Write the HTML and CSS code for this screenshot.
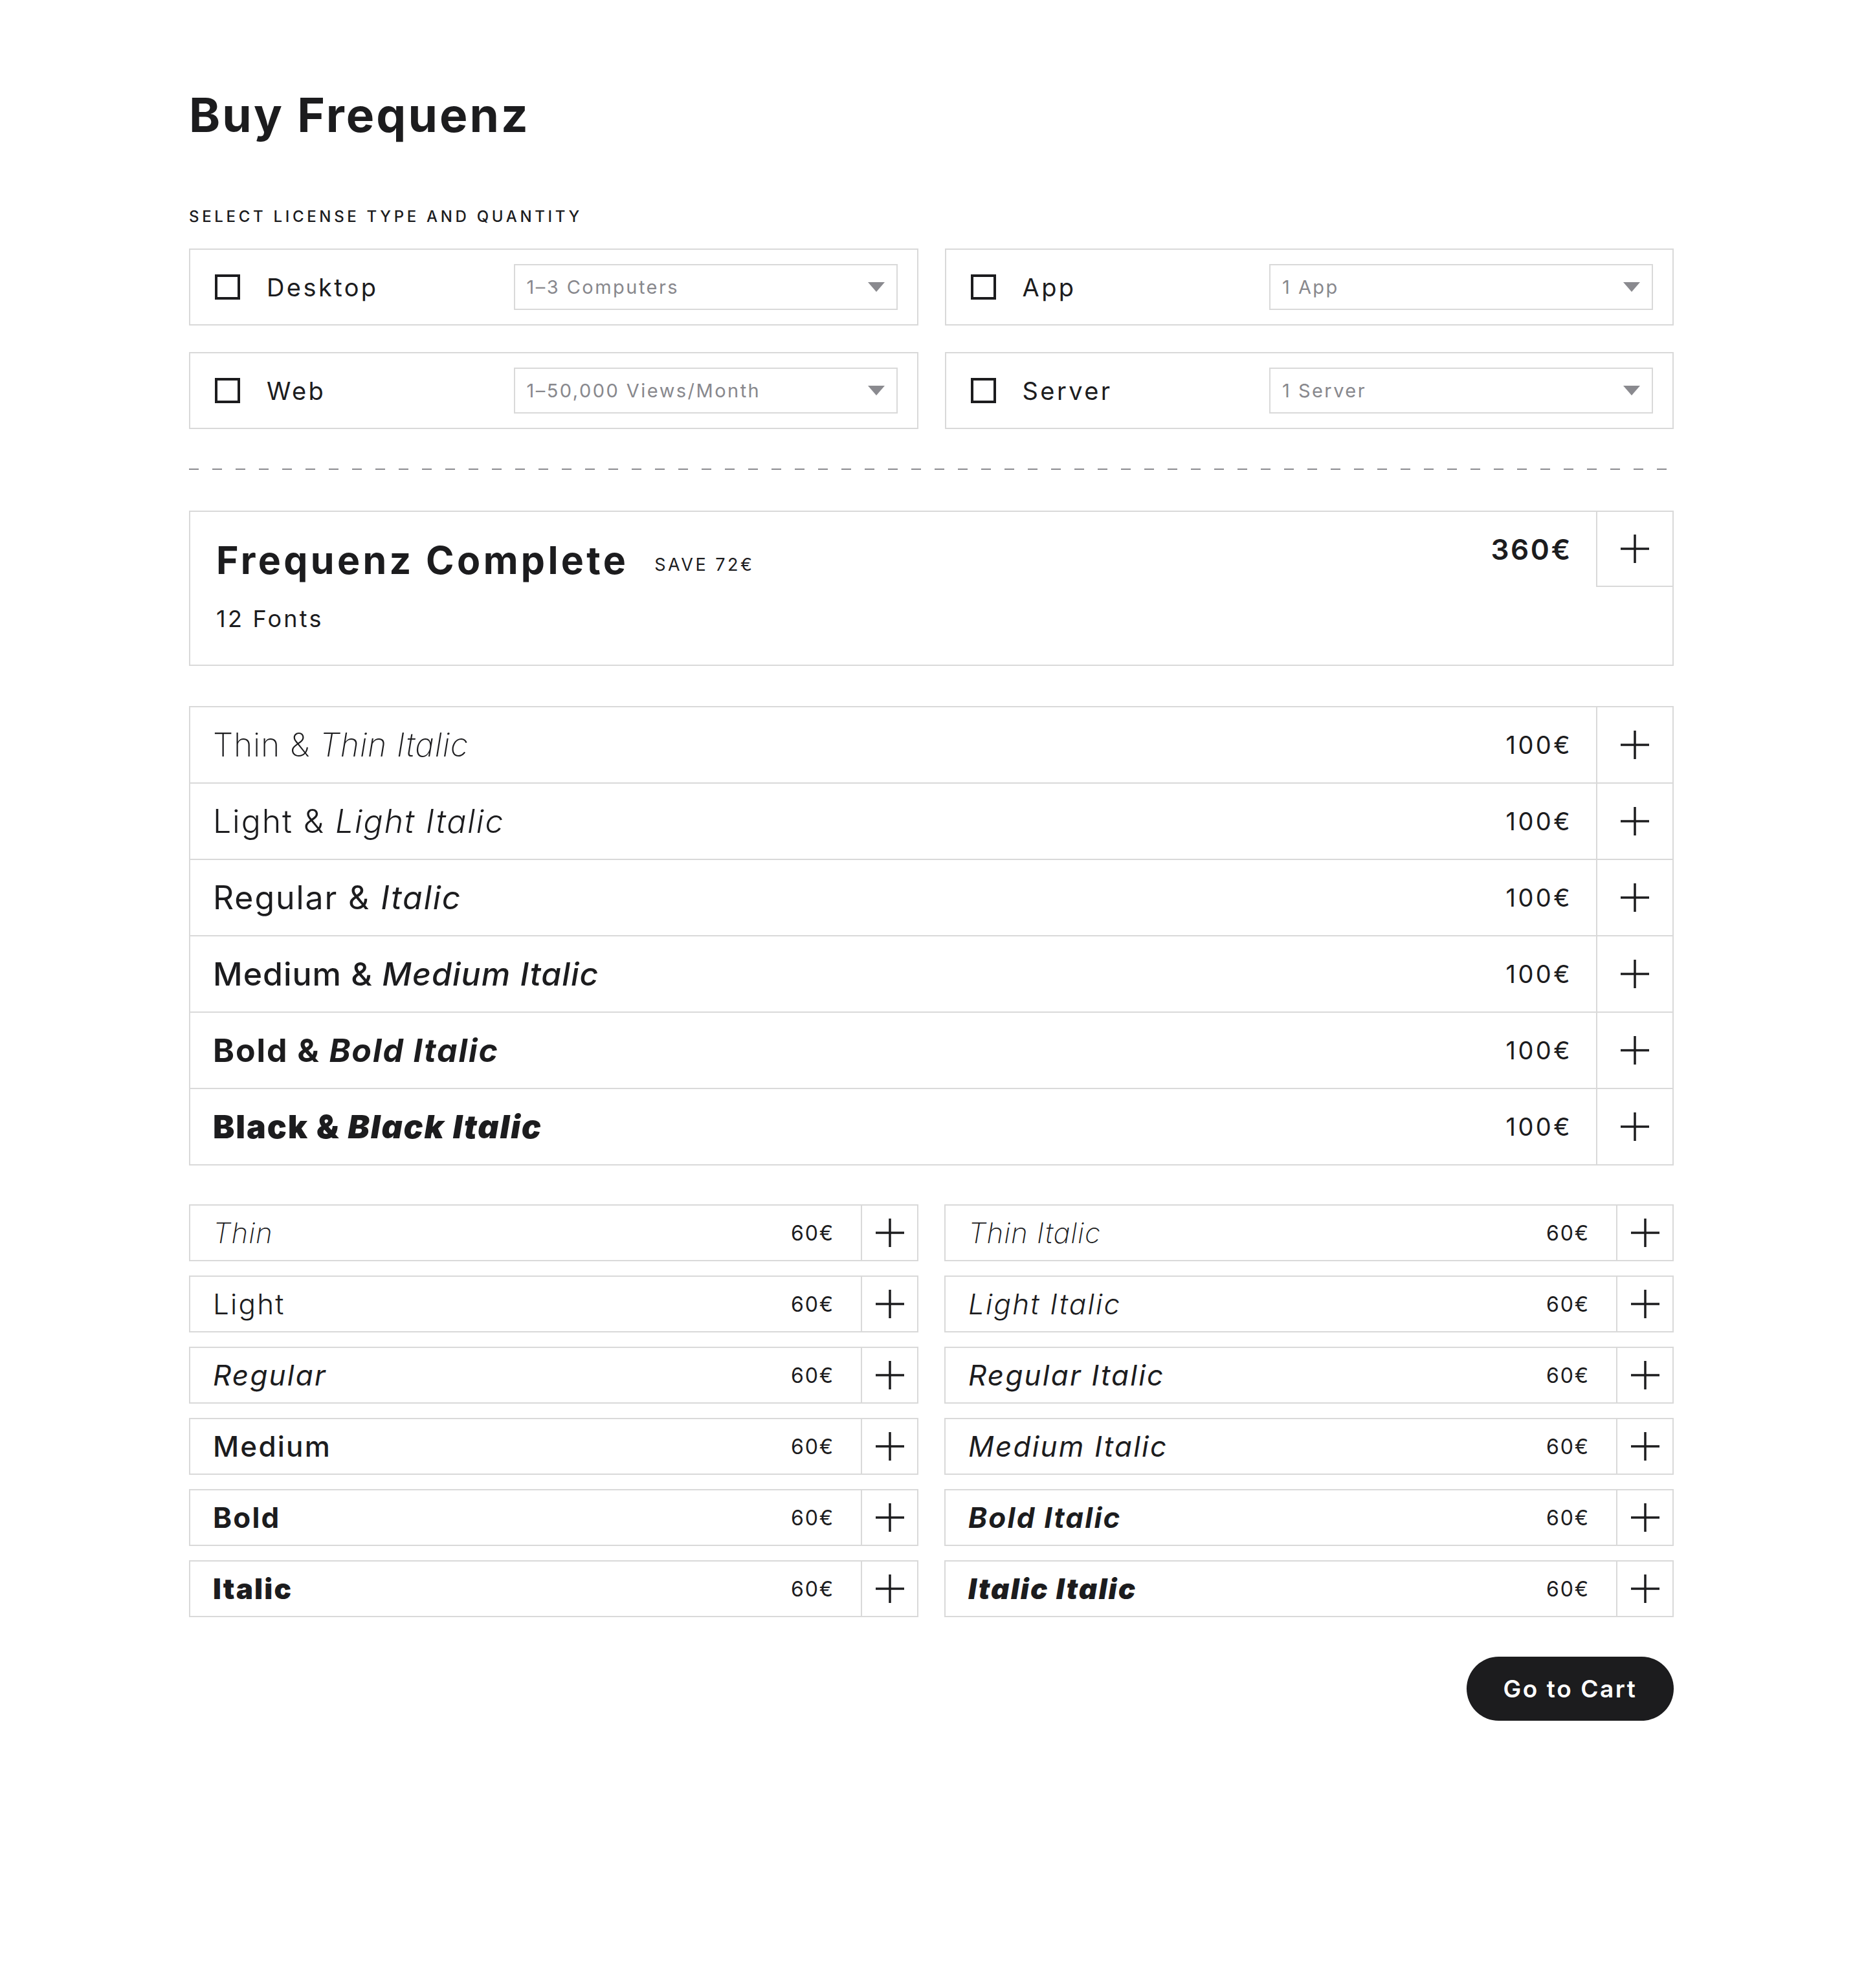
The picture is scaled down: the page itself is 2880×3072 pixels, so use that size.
FILE: index.html
```html
<!DOCTYPE html>
<html lang="en">
<head>
<meta charset="utf-8">
<title>Buy Frequenz</title>
<link rel="stylesheet" href="styles.css">
</head>
<body>
<main class="page">
  <h1 class="title">Buy Frequenz</h1>
  <h2 class="section-label">Select license type and quantity</h2>

  <div class="licenses">
    <div class="license">
      <span class="checkbox"></span>
      <span class="license-name">Desktop</span>
      <div class="select"><span>1–3 Computers</span><svg class="caret" viewBox="0 0 26 15"><polygon points="0,0 26,0 13,15"/></svg></div>
    </div>
    <div class="license">
      <span class="checkbox"></span>
      <span class="license-name">App</span>
      <div class="select"><span>1 App</span><svg class="caret" viewBox="0 0 26 15"><polygon points="0,0 26,0 13,15"/></svg></div>
    </div>
    <div class="license">
      <span class="checkbox"></span>
      <span class="license-name">Web</span>
      <div class="select"><span>1–50,000 Views/Month</span><svg class="caret" viewBox="0 0 26 15"><polygon points="0,0 26,0 13,15"/></svg></div>
    </div>
    <div class="license">
      <span class="checkbox"></span>
      <span class="license-name">Server</span>
      <div class="select"><span>1 Server</span><svg class="caret" viewBox="0 0 26 15"><polygon points="0,0 26,0 13,15"/></svg></div>
    </div>
  </div>

  <hr class="divider">

  <section class="complete">
    <div class="complete-info">
      <div class="complete-head">
        <h3 class="complete-title">Frequenz Complete</h3>
        <span class="save">SAVE 72€</span>
      </div>
      <p class="complete-count">12 Fonts</p>
    </div>
    <span class="complete-price">360€</span>
    <button class="add add-complete" type="button"><svg class="plus" viewBox="0 0 44 44"><path d="M22 0V44M0 22H44"/></svg></button>
  </section>

  <ul class="families">
    <li class="family"><span class="family-name w100">Thin &amp; <em>Thin Italic</em></span><span class="price">100€</span><button class="add" type="button"><svg class="plus" viewBox="0 0 44 44"><path d="M22 0V44M0 22H44"/></svg></button></li>
    <li class="family"><span class="family-name w300">Light &amp; <em>Light Italic</em></span><span class="price">100€</span><button class="add" type="button"><svg class="plus" viewBox="0 0 44 44"><path d="M22 0V44M0 22H44"/></svg></button></li>
    <li class="family"><span class="family-name w400">Regular &amp; <em>Italic</em></span><span class="price">100€</span><button class="add" type="button"><svg class="plus" viewBox="0 0 44 44"><path d="M22 0V44M0 22H44"/></svg></button></li>
    <li class="family"><span class="family-name w500">Medium &amp; <em>Medium Italic</em></span><span class="price">100€</span><button class="add" type="button"><svg class="plus" viewBox="0 0 44 44"><path d="M22 0V44M0 22H44"/></svg></button></li>
    <li class="family"><span class="family-name w700">Bold &amp; <em>Bold Italic</em></span><span class="price">100€</span><button class="add" type="button"><svg class="plus" viewBox="0 0 44 44"><path d="M22 0V44M0 22H44"/></svg></button></li>
    <li class="family"><span class="family-name w900">Black &amp; <em>Black Italic</em></span><span class="price">100€</span><button class="add" type="button"><svg class="plus" viewBox="0 0 44 44"><path d="M22 0V44M0 22H44"/></svg></button></li>
  </ul>

  <div class="singles">
    <div class="single"><span class="single-name w100 it">Thin</span><span class="price">60€</span><button class="add" type="button"><svg class="plus" viewBox="0 0 44 44"><path d="M22 0V44M0 22H44"/></svg></button></div>
    <div class="single"><span class="single-name w100 it">Thin Italic</span><span class="price">60€</span><button class="add" type="button"><svg class="plus" viewBox="0 0 44 44"><path d="M22 0V44M0 22H44"/></svg></button></div>
    <div class="single"><span class="single-name w300">Light</span><span class="price">60€</span><button class="add" type="button"><svg class="plus" viewBox="0 0 44 44"><path d="M22 0V44M0 22H44"/></svg></button></div>
    <div class="single"><span class="single-name w300 it">Light Italic</span><span class="price">60€</span><button class="add" type="button"><svg class="plus" viewBox="0 0 44 44"><path d="M22 0V44M0 22H44"/></svg></button></div>
    <div class="single"><span class="single-name w400 it">Regular</span><span class="price">60€</span><button class="add" type="button"><svg class="plus" viewBox="0 0 44 44"><path d="M22 0V44M0 22H44"/></svg></button></div>
    <div class="single"><span class="single-name w400 it">Regular Italic</span><span class="price">60€</span><button class="add" type="button"><svg class="plus" viewBox="0 0 44 44"><path d="M22 0V44M0 22H44"/></svg></button></div>
    <div class="single"><span class="single-name w500">Medium</span><span class="price">60€</span><button class="add" type="button"><svg class="plus" viewBox="0 0 44 44"><path d="M22 0V44M0 22H44"/></svg></button></div>
    <div class="single"><span class="single-name w400 it">Medium Italic</span><span class="price">60€</span><button class="add" type="button"><svg class="plus" viewBox="0 0 44 44"><path d="M22 0V44M0 22H44"/></svg></button></div>
    <div class="single"><span class="single-name w700">Bold</span><span class="price">60€</span><button class="add" type="button"><svg class="plus" viewBox="0 0 44 44"><path d="M22 0V44M0 22H44"/></svg></button></div>
    <div class="single"><span class="single-name w700 it">Bold Italic</span><span class="price">60€</span><button class="add" type="button"><svg class="plus" viewBox="0 0 44 44"><path d="M22 0V44M0 22H44"/></svg></button></div>
    <div class="single"><span class="single-name w900">Italic</span><span class="price">60€</span><button class="add" type="button"><svg class="plus" viewBox="0 0 44 44"><path d="M22 0V44M0 22H44"/></svg></button></div>
    <div class="single"><span class="single-name w900 it">Italic Italic</span><span class="price">60€</span><button class="add" type="button"><svg class="plus" viewBox="0 0 44 44"><path d="M22 0V44M0 22H44"/></svg></button></div>
  </div>

  <div class="actions">
    <button class="cart" type="button">Go to Cart</button>
  </div>
</main>
</body>
</html>
```

FILE: styles.css
```css
* {
  box-sizing: border-box;
  margin: 0;
  padding: 0;
}

html,
body {
  background: #ffffff;
}

body {
  font-family: Inter, "DejaVu Sans", sans-serif;
  color: #1c1c1e;
  letter-spacing: 0.06em;
}

.page {
  width: 2294px;
  margin-left: 292px;
  padding-top: 138px;
  padding-bottom: 300px;
}

.title {
  font-size: 73px;
  font-weight: 700;
  line-height: 80px;
  letter-spacing: 0.042em;
}

.section-label {
  margin-top: 102px;
  font-size: 24px;
  font-weight: 500;
  line-height: 30px;
  letter-spacing: 0.195em;
  text-transform: uppercase;
}

/* License selection */
.licenses {
  margin-top: 34px;
  display: grid;
  grid-template-columns: 1fr 1fr;
  column-gap: 41px;
  row-gap: 41px;
}

.license {
  height: 119px;
  border: 2px solid #d9d9d9;
  display: flex;
  align-items: center;
  padding: 0 30px 0 38px;
}

.checkbox {
  flex: none;
  width: 39px;
  height: 39px;
  border: 4px solid #1c1c1e;
}

.license-name {
  margin-left: 41px;
  font-size: 38px;
  line-height: 44px;
  letter-spacing: 0.09em;
}

.select {
  margin-left: auto;
  flex: 0 0 593px;
  height: 71px;
  border: 2px solid #d9d9d9;
  display: flex;
  align-items: center;
  justify-content: space-between;
  padding: 0 18px;
  color: #88888d;
  font-size: 29px;
  letter-spacing: 0.085em;
}

.caret {
  width: 26px;
  height: 15px;
  fill: #8a8a8f;
}

.divider {
  margin-top: 61px;
  height: 2px;
  border: 0;
  background: repeating-linear-gradient(to right, #8a8a8f 0 15px, transparent 15px 36px);
}

/* Complete family */
.complete {
  margin-top: 63px;
  border: 2px solid #d9d9d9;
  display: flex;
  align-items: flex-start;
}

.complete-info {
  flex: 1;
  padding: 40px 0 49px 40px;
}

.complete-head {
  display: flex;
  align-items: center;
  height: 70px;
}

.complete-title {
  font-size: 59px;
  font-weight: 700;
  line-height: 70px;
  letter-spacing: 0.074em;
}

.save {
  margin-left: 40px;
  margin-top: 13px;
  font-size: 27px;
  line-height: 34px;
  letter-spacing: 0.13em;
}

.complete-count {
  margin-top: 33px;
  font-size: 36px;
  line-height: 44px;
  letter-spacing: 0.09em;
}

.complete-price {
  height: 116px;
  display: flex;
  align-items: center;
  margin-right: 37px;
  font-size: 44px;
  font-weight: 600;
  letter-spacing: 0.06em;
}

/* Add buttons */
.add {
  flex: none;
  display: flex;
  align-items: center;
  justify-content: center;
  background: transparent;
  border: 0;
  border-left: 2px solid #d9d9d9;
  color: #1c1c1e;
  cursor: pointer;
}

.add-complete {
  width: 118px;
  height: 116px;
  border-bottom: 2px solid #d9d9d9;
}

.plus {
  width: 44px;
  height: 44px;
  fill: none;
  stroke: currentColor;
  stroke-width: 3.5;
}

/* Family pairs */
.families {
  list-style: none;
  margin-top: 62px;
  border: 2px solid #d9d9d9;
}

.family {
  height: 118px;
  display: flex;
  align-items: center;
  padding-left: 35px;
  border-top: 2px solid #d9d9d9;
}

.family:first-child {
  height: 116px;
  border-top: 0;
}

.family-name {
  flex: 1;
  font-size: 50px;
  line-height: 60px;
  letter-spacing: 0.038em;
}

.family-name.w100 {
  letter-spacing: 0.015em;
}

.family-name.w500 {
  letter-spacing: 0.02em;
}

.family-name em {
  font-style: italic;
}

.family .price {
  margin-right: 37px;
  font-size: 38px;
  letter-spacing: 0.09em;
}

.family .add {
  align-self: stretch;
  width: 118px;
}

/* Single styles */
.singles {
  margin-top: 60px;
  display: grid;
  grid-template-columns: 1fr 1fr;
  column-gap: 40px;
  row-gap: 22px;
}

.single {
  height: 88px;
  border: 2px solid #d9d9d9;
  display: flex;
  align-items: center;
  padding-left: 35px;
}

.single-name {
  flex: 1;
  font-size: 44px;
  line-height: 54px;
  letter-spacing: 0.05em;
}

.single-name.w100 {
  letter-spacing: 0.02em;
}

.single .price {
  margin-right: 41px;
  font-size: 32px;
  letter-spacing: 0.06em;
}

.single .add {
  align-self: stretch;
  width: 87px;
}

.w100 { font-weight: 200; }
.w300 { font-weight: 300; }
.w400 { font-weight: 400; }
.w500 { font-weight: 500; }
.w700 { font-weight: 700; }
.w900 { font-weight: 900; }
.it { font-style: italic; }

/* Cart */
.actions {
  margin-top: 61px;
  display: flex;
  justify-content: flex-end;
}

.cart {
  width: 320px;
  height: 99px;
  border: 0;
  border-radius: 50px;
  background: #1c1c1e;
  color: #ffffff;
  font-family: Inter, "DejaVu Sans", sans-serif;
  font-size: 37px;
  font-weight: 600;
  letter-spacing: 0.07em;
  cursor: pointer;
}
```
